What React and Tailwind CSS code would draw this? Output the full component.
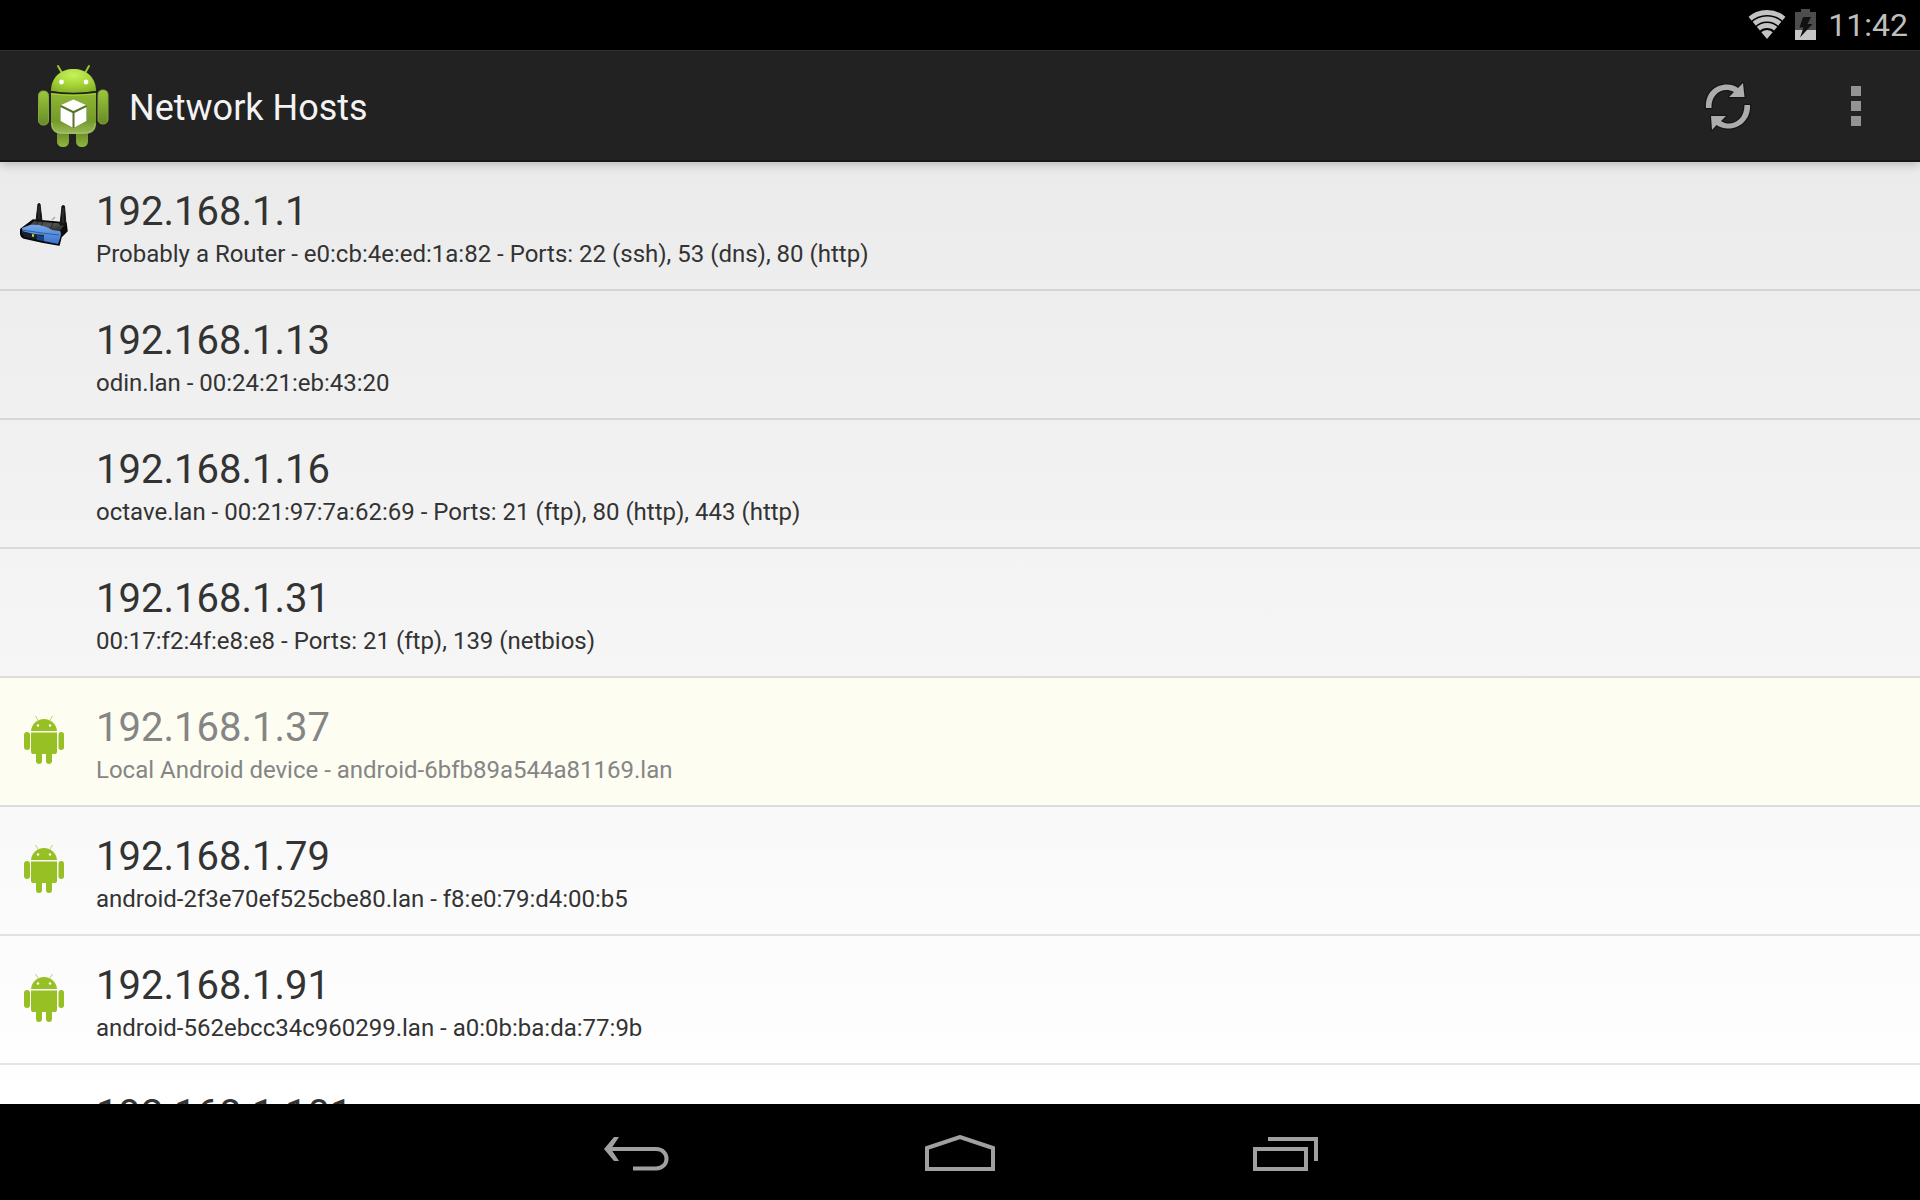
import React from "react";

const hosts = [
  { ip: "192.168.1.1", info: "Probably a Router - e0:cb:4e:ed:1a:82 - Ports: 22 (ssh), 53 (dns), 80 (http)", icon: "router" },
  { ip: "192.168.1.13", info: "odin.lan - 00:24:21:eb:43:20" },
  { ip: "192.168.1.16", info: "octave.lan - 00:21:97:7a:62:69 - Ports: 21 (ftp), 80 (http), 443 (http)" },
  { ip: "192.168.1.31", info: "00:17:f2:4f:e8:e8 - Ports: 21 (ftp), 139 (netbios)" },
  { ip: "192.168.1.37", info: "Local Android device - android-6bfb89a544a81169.lan", icon: "android", local: true },
  { ip: "192.168.1.79", info: "android-2f3e70ef525cbe80.lan - f8:e0:79:d4:00:b5", icon: "android" },
  { ip: "192.168.1.91", info: "android-562ebcc34c960299.lan - a0:0b:ba:da:77:9b", icon: "android" },
  { ip: "192.168.1.101", info: "" },
];

function WifiIcon() {
  return (
    <svg className="h-8 w-10" viewBox="0 0 40 32" fill="none" aria-hidden="true">
      <defs>
        <clipPath id="wifiWedge">
          <path d="M20 30 L-5 0 V-6 H45 V0 Z" />
        </clipPath>
      </defs>
      <g clipPath="url(#wifiWedge)" stroke="#c3c3c3" strokeWidth="5">
        <circle cx="20" cy="30" r="26.500" />
        <circle cx="20" cy="30" r="20" />
        <circle cx="20" cy="30" r="13.500" />
        <circle cx="20" cy="30" r="9" fill="#c3c3c3" stroke="none" />
      </g>
    </svg>
  );
}

function BatteryIcon() {
  return (
    <svg className="h-8 w-[21px]" viewBox="0 0 21 32" aria-hidden="true">
      <path d="M6 0H15V3H21V21H0V3H6Z" fill="#4d4d4d" />
      <path d="M0 21H21V31H0Z" fill="#c6c6c6" />
      <path d="M8 8H16L12.500 15H17.500L5 28.500L8.500 18.500H4.500Z" fill="#111" />
    </svg>
  );
}

function AppIcon() {
  return (
    <svg className="h-[84px] w-[72px]" viewBox="0 0 72 84" aria-hidden="true">
      <defs>
        <radialGradient id="headFill" cx=".5" cy=".25" r=".8">
          <stop offset="0" stopColor="#c5f35c" />
          <stop offset=".55" stopColor="#a5d335" />
          <stop offset="1" stopColor="#86ad2c" />
        </radialGradient>
        <linearGradient id="bodyFill" x1="0" y1="0" x2="0" y2="1">
          <stop offset="0" stopColor="#8fb833" />
          <stop offset=".7" stopColor="#759a2a" />
          <stop offset="1" stopColor="#9abb5b" />
        </linearGradient>
        <linearGradient id="armFill" x1="0" y1="0" x2="0" y2="1">
          <stop offset="0" stopColor="#9bc83a" />
          <stop offset="1" stopColor="#688a27" />
        </linearGradient>
        <linearGradient id="legFill" x1="0" y1="0" x2="0" y2="1">
          <stop offset="0" stopColor="#557020" />
          <stop offset="1" stopColor="#90b83c" />
        </linearGradient>
      </defs>
      <path d="M21 2L25 9M52 2L48 9" stroke="#9cc536" strokeWidth="2" strokeLinecap="round" />
      <rect x="20" y="60" width="12" height="23" rx="5.500" fill="url(#legFill)" />
      <rect x="39" y="60" width="12" height="23" rx="5.500" fill="url(#legFill)" />
      <rect x="1.500" y="27" width="10" height="34" rx="4.500" fill="url(#armFill)" stroke="#84a742" />
      <rect x="61" y="26" width="10" height="34" rx="4.500" fill="url(#armFill)" stroke="#84a742" />
      <path d="M14 28H59V60C59 67 54 70 47 70H26C19 70 14 67 14 60Z" fill="url(#bodyFill)" />
      <path d="M15 59C15 67 20 69 27 69H46C53 69 58 66 58 59" fill="none" stroke="#a4c46a" />
      <path d="M14 30Q36 33 59 30" fill="none" stroke="#a6d040" />
      <path d="M14 27C14 13 24 5 36.500 5S59 13 59 27Q36 31 14 27Z" fill="url(#headFill)" />
      <path d="M14 28Q36 31 59 28" fill="none" stroke="#18230a" strokeWidth="1.500" />
      <circle cx="24.500" cy="18" r="2.400" fill="#fff" />
      <circle cx="49" cy="18" r="2.400" fill="#fff" />
      <path d="M36.500 36L50 42V57L36.500 64L23 57V42Z" fill="#56742a" />
      <path d="M36.500 35.500L49 41L36.500 47L24 41Z" fill="#fff" />
      <path d="M23.500 43L35.500 49V63.500L23.500 57Z" fill="#fff" />
      <path d="M49.500 43L37.500 49V63.500L49.500 57Z" fill="#fff" />
    </svg>
  );
}

function RefreshIcon() {
  return (
    <svg className="h-[54px] w-[54px]" viewBox="0 1 54 54" aria-hidden="true">
      <g stroke="#151515" strokeWidth="2.500" fill="#151515" strokeLinejoin="round">
        <path d="M5 30C4 15 14 6.500 26 6.500C31 6.500 34 8 37 10L42 5L43.500 19L28 19L33 14C30 12.500 28 12 25.500 12C17 12 10 19 10.500 30Z" />
        <path d="M49 27C50 41 39 50.500 28 50.500C22 50.500 19 49 15.500 47L11 52L10 38L25 38L20 43C23 45 25 45.500 28 45.500C36 45.500 43.500 39 43.500 27Z" />
      </g>
      <path d="M5 30C4 15 14 6.500 26 6.500C31 6.500 34 8 37 10L42 5L43.500 19L28 19L33 14C30 12.500 28 12 25.500 12C17 12 10 19 10.500 30Z" fill="#acacac" />
      <path d="M49 27C50 41 39 50.500 28 50.500C22 50.500 19 49 15.500 47L11 52L10 38L25 38L20 43C23 45 25 45.500 28 45.500C36 45.500 43.500 39 43.500 27Z" fill="#acacac" />
    </svg>
  );
}

function OverflowIcon() {
  return (
    <svg className="h-10 w-[10px]" viewBox="0 0 10 40" fill="#949494" aria-hidden="true">
      <rect width="10" height="10" />
      <rect y="15" width="10" height="10" />
      <rect y="30" width="10" height="10" />
    </svg>
  );
}

function RouterIcon() {
  return (
    <svg className="h-12 w-12" viewBox="0 0 48 48" aria-hidden="true">
      <defs>
        <linearGradient id="routerFace" x1="0" y1="0" x2="0" y2="1">
          <stop offset="0" stopColor="#78abec" />
          <stop offset="1" stopColor="#3871c8" />
        </linearGradient>
        <linearGradient id="routerTop" x1="0" y1="0" x2="1" y2="1">
          <stop offset="0" stopColor="#3a3a3a" />
          <stop offset=".5" stopColor="#555" />
          <stop offset="1" stopColor="#222" />
        </linearGradient>
      </defs>
      <path d="M32 20L35 17" stroke="#aaa" strokeWidth="1.500" />
      <path d="M13 20L46 23L47 31L41 37L39 45L22 42L4 38C1 37 0 34 1 29Z" fill="#0b0b0d" stroke="#08080a" strokeWidth="1.500" strokeLinejoin="round" />
      <path d="M14 21L45 24L40 31L8 27Z" fill="url(#routerTop)" />
      <path d="M18 22L15 27M23 22L20 28M33 23L30 30" stroke="#262626" />
      <path d="M2 28L10 25C18 24 26 26 32 30L40 31C42 33 40 39 38 44L23 41L12 36L3 34Z" fill="url(#routerFace)" />
      <path d="M2 30L22 33L39 35" fill="none" stroke="#2c5da6" />
      <path d="M2 31L14 34L24 35V41L4 37Z" fill="#18202b" />
      <path d="M17 35L24 36V41L17 40Z" fill="#16427f" />
      <path d="M12 34L14 34.500V37L12 36.500Z" fill="#c8e22a" />
      <path d="M18 4Q19 3 20 4L22 21H16Z" fill="#151515" stroke="#151515" />
      <path d="M42 6Q43.500 5 44.500 6L46 25H40Z" fill="#151515" stroke="#151515" />
      <path d="M19 6V19M43 8V23" stroke="#3c3c3c" />
    </svg>
  );
}

function AndroidIcon() {
  return (
    <svg className="h-12 w-12" viewBox="0 0 48 48" fill="#97c024" aria-hidden="true">
      <path d="M15.500 0L18 4M32.500 0L30 4" stroke="#b9d56d" strokeWidth="1" />
      <path d="M11 15C11.500 8 17 3 24 3S36.500 8 37 15Z" />
      <circle cx="18" cy="9.500" r="1.200" fill="#fff" />
      <circle cx="30" cy="9.500" r="1.200" fill="#fff" />
      <path d="M11 16.500H37V36Q37 38 35 38H32V45A3 3 0 0 1 26 45V38H22V45A3 3 0 0 1 16 45V38H13Q11 38 11 36Z" />
      <rect x="4" y="16" width="6" height="18" rx="3" />
      <rect x="38.500" y="16" width="5.500" height="18" rx="2.700" />
    </svg>
  );
}

function HostRow({ host }) {
  return (
    <li className={host.local ? "border-b-2 border-[#dcdcdc] bg-[#fdfdf2] text-[#858585]" : "border-b-2 border-black/10 text-[#333]"}>
      <button type="button" className="flex h-[127px] w-full items-start pl-5 pt-[26px] text-left">
        <span className="w-[76px] shrink-0 pt-3">
          {host.icon === "router" && <RouterIcon />}
          {host.icon === "android" && <AndroidIcon />}
        </span>
        <span className="flex flex-col">
          <span className="text-[40px] leading-[48px]">{host.ip}</span>
          <span className="text-[24px] leading-[36px]">{host.info}</span>
        </span>
      </button>
    </li>
  );
}

export default function App() {
  return (
    <div className="flex h-screen flex-col overflow-hidden bg-black font-[Roboto,sans-serif]">
      <div className="flex h-[50px] shrink-0 items-center justify-end pr-3 text-[#bebebe]">
        <WifiIcon />
        <span className="ml-2">
          <BatteryIcon />
        </span>
        <span className="ml-3 text-[32px] leading-[52px]">11:42</span>
      </div>

      <header className="z-10 flex h-28 shrink-0 items-center border-b-2 border-t border-b-[#151515] border-t-[#303030] bg-[#222] pl-[37px] pr-[59px] shadow-[0_2px_10px_rgba(0,0,0,0.25)]">
        <AppIcon />
        <h1 className="ml-5 pt-1 text-[36px] leading-[48px] text-[#f3f3f3]">Network Hosts</h1>
        <button type="button" aria-label="Refresh" className="ml-auto">
          <RefreshIcon />
        </button>
        <button type="button" aria-label="More options" className="ml-[96px]">
          <OverflowIcon />
        </button>
      </header>

      <main className="min-h-0 flex-1 overflow-hidden bg-linear-to-b from-[#ebebeb] to-white">
        <ul>
          {hosts.map((host) => (
            <HostRow key={host.ip} host={host} />
          ))}
        </ul>
      </main>

      <nav className="flex h-24 shrink-0 items-center justify-center gap-[250px] pt-1.5">
        <button type="button" aria-label="Back">
          <svg className="h-10 w-[72px]" viewBox="0 0 72 40" fill="none" aria-hidden="true">
            <path d="M5 14H54C68 14 68 33.500 54 33.500H31" stroke="#a0a0a0" strokeWidth="4" />
            <path d="M12 2H17L9 14L17 26H12L2 14Z" fill="#a0a0a0" />
          </svg>
        </button>
        <button type="button" aria-label="Home">
          <svg className="h-10 w-[72px]" viewBox="0 0 72 40" fill="none" aria-hidden="true">
            <path d="M3 34V13L36 2L69 13V34Z" stroke="#a0a0a0" strokeWidth="4" />
          </svg>
        </button>
        <button type="button" aria-label="Recent apps">
          <svg className="h-10 w-[72px]" viewBox="0 0 72 40" fill="none" stroke="#a0a0a0" strokeWidth="4" aria-hidden="true">
            <path d="M9 14H60V34H9Z" />
            <path d="M22 4H70V26" />
          </svg>
        </button>
      </nav>
    </div>
  );
}
